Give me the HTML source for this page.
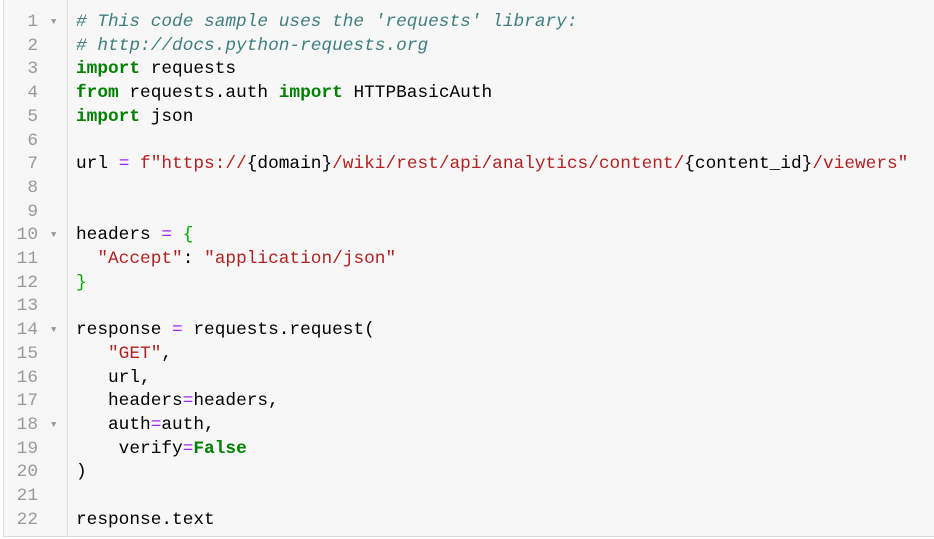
<!DOCTYPE html>
<html><head><style>
html,body{margin:0;padding:0;width:934px;height:539px;background:#fff;overflow:hidden}
.box{position:absolute;left:3px;top:-2px;width:940px;height:539px;background:#f7f7f7;border:1px solid #dcdcdc;box-sizing:border-box}
.gut{position:absolute;left:3px;top:0;width:64px;height:537px;border-right:1px solid #e0e0e0}
pre{margin:0;position:absolute;top:11px;font-family:"Liberation Mono",monospace;font-size:17.8px;line-height:23.7px;white-space:pre}
.nums{left:0;width:38px;text-align:right;color:#999}
.fold{left:51px;color:#999;font-size:9px;line-height:23.7px}
.code{left:76px;color:#000}
.c{color:#3f7f7f;font-style:italic}.k{color:#008000;font-weight:bold}.s{color:#b22222}.o{color:#aa22ff}.g{color:#0a0}
</style></head><body>
<div class="box"></div><div class="gut"></div>
<pre class="nums">1
2
3
4
5
6
7
8
9
10
11
12
13
14
15
16
17
18
19
20
21
22</pre>
<pre class="fold">▼








▼



▼



▼</pre>
<pre class="code"><span class="c"># This code sample uses the 'requests' library:</span>
<span class="c"># http://docs.python-requests.org</span>
<span class="k">import</span> requests
<span class="k">from</span> requests.auth <span class="k">import</span> HTTPBasicAuth
<span class="k">import</span> json

url <span class="o">=</span> <span class="s">f"https://</span>{domain}<span class="s">/wiki/rest/api/analytics/content/</span>{content_id}<span class="s">/viewers"</span>


headers <span class="o">=</span> <span class="g">{</span>
  <span class="s">"Accept"</span>: <span class="s">"application/json"</span>
<span class="g">}</span>

response <span class="o">=</span> requests.request(
   <span class="s">"GET"</span>,
   url,
   headers<span class="o">=</span>headers,
   auth<span class="o">=</span>auth,
    verify<span class="o">=</span><span class="k">False</span>
)

response.text</pre>
</body></html>
